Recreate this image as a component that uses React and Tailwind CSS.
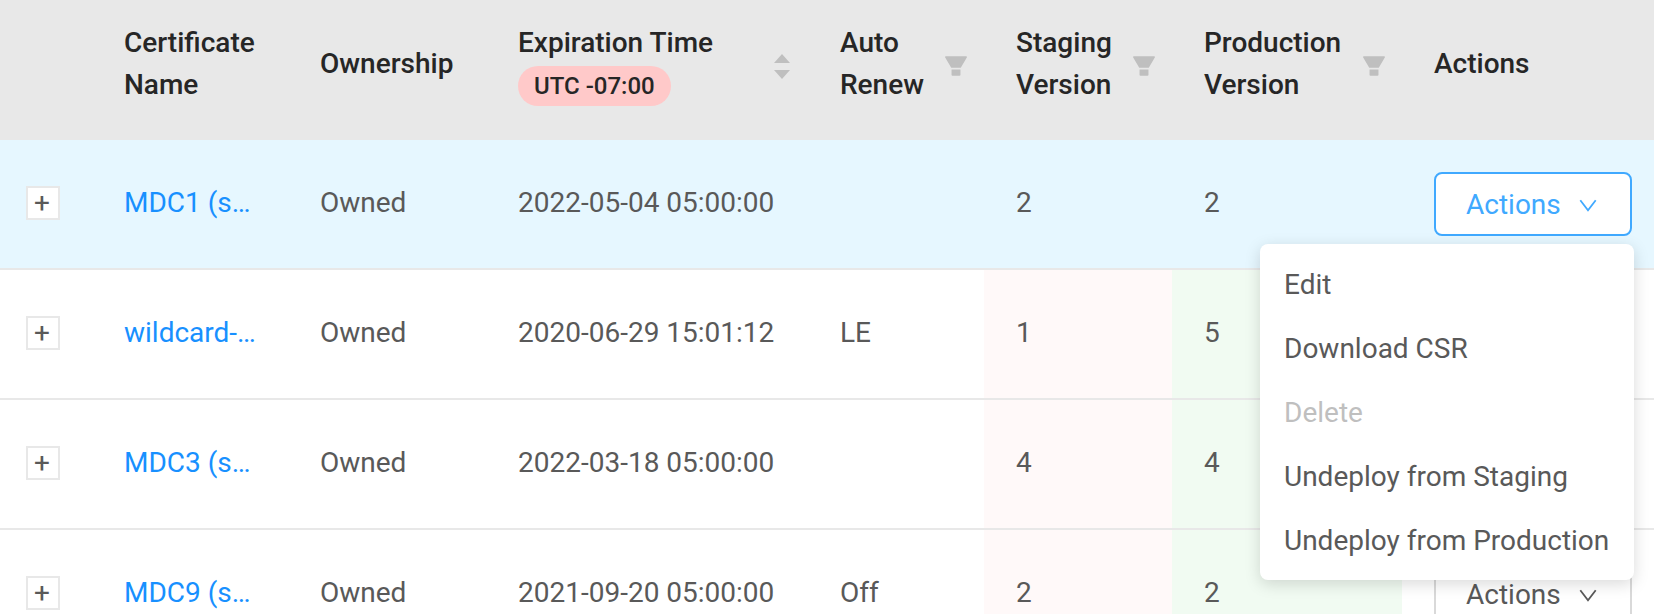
import { AiFillFilter } from "react-icons/ai";

const rows = [
  { name: "MDC1 (s…", expires: "2022-05-04 05:00:00", renew: "", staging: 2, production: 2, active: true },
  { name: "wildcard-…", expires: "2020-06-29 15:01:12", renew: "LE", staging: 1, production: 5 },
  { name: "MDC3 (s…", expires: "2022-03-18 05:00:00", renew: "", staging: 4, production: 4 },
  { name: "MDC9 (s…", expires: "2021-09-20 05:00:00", renew: "Off", staging: 2, production: 2 },
];

const menuItems = [
  { label: "Edit" },
  { label: "Download CSR" },
  { label: "Delete", disabled: true },
  { label: "Undeploy from Staging" },
  { label: "Undeploy from Production" },
];

function ChevronDown() {
  return (
    <svg className="h-5 w-5" viewBox="0 0 20 20" fill="none" stroke="currentColor" strokeWidth="1.8" aria-hidden="true">
      <path d="M2.3 5.2 10 15.2 17.7 5.2" />
    </svg>
  );
}

function SortIcon() {
  return (
    <svg className="h-[26px] w-4" viewBox="0 0 16 26" fill="currentColor" aria-hidden="true">
      <path d="M8 0 16 9H0zM0 16h16l-8 9z" />
    </svg>
  );
}

function FilterHeader({ children }) {
  return (
    <th scope="col" className="pt-[22px] pr-3.5 pb-[34px] pl-8 font-medium">
      <div className="flex items-center justify-between">
        <span>{children}</span>
        <button type="button" aria-label="Filter" className="pt-1 text-[#bfbfbf]">
          <AiFillFilter className="h-7 w-7" />
        </button>
      </div>
    </th>
  );
}

function ActionsMenu() {
  return (
    <ul
      role="menu"
      className="absolute top-full -right-0.5 z-10 mt-2 min-w-[374px] rounded-lg bg-white py-2 shadow-[0_4px_16px_rgba(0,0,0,0.15)]"
    >
      {menuItems.map((item) => (
        <li key={item.label} role="none">
          <button
            type="button"
            role="menuitem"
            disabled={item.disabled}
            className="block h-16 w-full px-6 pt-0.5 text-left whitespace-nowrap text-[#595959] disabled:text-[#bfbfbf]"
          >
            {item.label}
          </button>
        </li>
      ))}
    </ul>
  );
}

function Row({ row }) {
  return (
    <tr className={row.active ? "h-[130px] bg-[#e6f7ff] *:border-b-2 *:border-[#e8e8e8]" : "h-[130px] *:border-b-2 *:border-[#e8e8e8]"}>
      <td className="pb-0.5 pl-[26px]">
        <button
          type="button"
          aria-label="Expand row"
          className="flex h-[34px] w-[34px] items-center justify-center border-2 border-[#e8e8e8] bg-white pr-0.5"
        >
          +
        </button>
      </td>
      <td className="pb-0.5 pl-8 whitespace-nowrap">
        <a href="#" className="text-[#1890ff]">{row.name}</a>
      </td>
      <td className="pb-0.5 pl-8">Owned</td>
      <td className="pb-0.5 pl-8 whitespace-nowrap">{row.expires}</td>
      <td className="pb-0.5 pl-8">{row.renew}</td>
      <td className={row.active ? "pb-0.5 pl-8" : "bg-[#fff9f9] pb-0.5 pl-8"}>{row.staging}</td>
      <td className={row.active ? "pb-0.5 pl-8" : "bg-[#f1fbf2] pb-0.5 pl-8"}>{row.production}</td>
      <td className="pl-8">
        <div className="relative w-[198px]">
          <button
            type="button"
            aria-haspopup="menu"
            className={
              row.active
                ? "flex h-16 w-full items-center justify-between rounded-lg border-2 border-[#40a9ff] bg-white pt-0.5 pr-8 pl-[30px] text-[#40a9ff]"
                : "flex h-16 w-full items-center justify-between rounded-lg border-2 border-[#d9d9d9] bg-white pt-0.5 pr-8 pl-[30px]"
            }
          >
            Actions
            <ChevronDown />
          </button>
          {row.active && <ActionsMenu />}
        </div>
      </td>
    </tr>
  );
}

export default function App() {
  return (
    <main className="h-screen overflow-hidden bg-white font-[Roboto,sans-serif] text-[28px] leading-[42px] text-[#595959]">
      <table className="w-full table-fixed border-separate border-spacing-0 text-left">
        <colgroup>
          <col className="w-[92px]" />
          <col className="w-[196px]" />
          <col className="w-[198px]" />
          <col className="w-[322px]" />
          <col className="w-[176px]" />
          <col className="w-[188px]" />
          <col className="w-[230px]" />
          <col className="w-[252px]" />
        </colgroup>
        <thead className="bg-[#e8e8e8] text-[#262626]">
          <tr>
            <td />
            <th scope="col" className="pt-[22px] pr-4 pb-[34px] pl-8 font-medium">Certificate Name</th>
            <th scope="col" className="pt-[22px] pb-[34px] pl-8 font-medium">Ownership</th>
            <th scope="col" className="pt-[22px] pr-[18px] pb-[34px] pl-8 font-medium">
              <div className="flex items-center justify-between">
                <div>
                  <div>Expiration Time</div>
                  <div className="flex h-[42px] items-center pt-0.5">
                    <span className="rounded-full bg-[#ffc9c9] px-4 text-[24px] leading-[40px]">UTC -07:00</span>
                  </div>
                </div>
                <button type="button" aria-label="Sort by expiration time" className="pt-1.5 text-[#bfbfbf]">
                  <SortIcon />
                </button>
              </div>
            </th>
            <FilterHeader>Auto<br />Renew</FilterHeader>
            <FilterHeader>Staging<br />Version</FilterHeader>
            <FilterHeader>Production<br />Version</FilterHeader>
            <th scope="col" className="pt-[22px] pb-[34px] pl-8 font-medium">Actions</th>
          </tr>
        </thead>
        <tbody>
          {rows.map((row) => (
            <Row key={row.name} row={row} />
          ))}
        </tbody>
      </table>
    </main>
  );
}
